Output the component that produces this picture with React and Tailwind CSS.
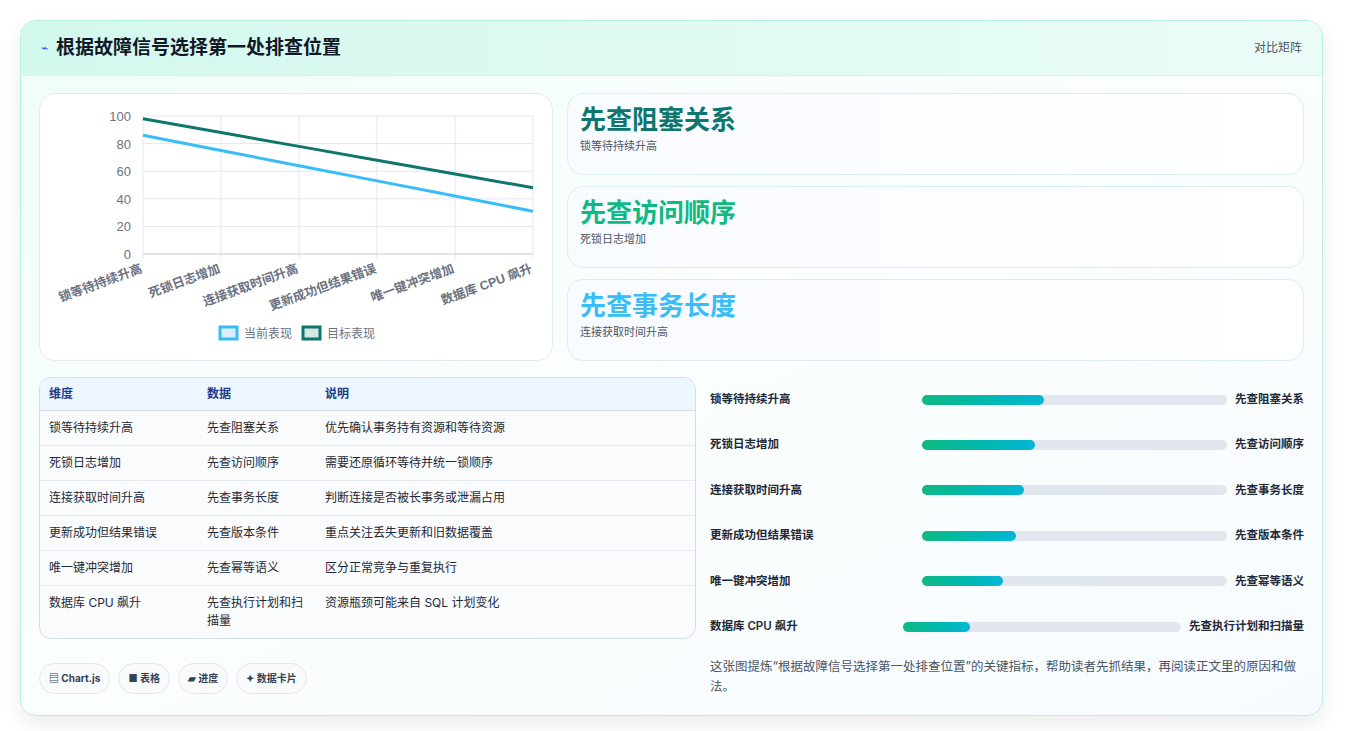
const rows = [
  ['锁等待持续升高', '先查阻塞关系', '优先确认事务持有资源和等待资源', 40],
  ['死锁日志增加', '先查访问顺序', '需要还原循环等待并统一锁顺序', 37],
  ['连接获取时间升高', '先查事务长度', '判断连接是否被长事务或泄漏占用', 33.5],
  ['更新成功但结果错误', '先查版本条件', '重点关注丢失更新和旧数据覆盖', 31],
  ['唯一键冲突增加', '先查幂等语义', '区分正常竞争与重复执行', 26.5],
  ['数据库 CPU 飙升', '先查执行计划和扫描量', '资源瓶颈可能来自 SQL 计划变化', 24],
]

const cards = [
  ['先查阻塞关系', '锁等待持续升高', 'text-[#0f766e]'],
  ['先查访问顺序', '死锁日志增加', 'text-[#10b981]'],
  ['先查事务长度', '连接获取时间升高', 'text-[#38bdf8]'],
]

function Chart() {
  const x0 = 103, x1 = 493, y0 = 160, y1 = 22
  const xs = [0, 1, 2, 3, 4, 5].map(i => x0 + (i * (x1 - x0)) / 5)
  const y = v => y0 - ((y0 - y1) * v) / 100
  const cur = [86, 75, 64, 53, 42, 31]
  const tgt = [98, 88, 78, 68, 58, 48]
  return (
    <svg width="513" height="267" className="block">
      {[0, 20, 40, 60, 80, 100].map(v => (
        <g key={v}>
          <line x1={x0} x2={x1} y1={y(v)} y2={y(v)} stroke="#e5e7f0" />
          <text x={x0 - 12} y={y(v) + 5} textAnchor="end" fontSize="13" fill="#6b7280" fontFamily="Liberation Sans, sans-serif">{v}</text>
        </g>
      ))}
      {xs.map((x, i) => (
        <line key={i} x1={x} x2={x} y1={y1} y2={y0 + 5} stroke="#e5e7f0" />
      ))}
      <line x1={x0} x2={x1} y1={y0} y2={y0} stroke="#d1d5db" />
      <polyline points={xs.map((x, i) => `${x},${y(cur[i])}`).join(' ')} fill="none" stroke="#38bdf8" strokeWidth="3" />
      <polyline points={xs.map((x, i) => `${x},${y(tgt[i])}`).join(' ')} fill="none" stroke="#0f766e" strokeWidth="3" />
      {rows.map((r, i) => (
        <text key={i} x={xs[i]} y={y0 + 18} textAnchor="end" fontSize="12.5" fontWeight="bold" fill="#6b7280" transform={`rotate(-20 ${xs[i]} ${y0 + 18})`} fontFamily="Liberation Sans, 'Noto Sans CJK SC', sans-serif">{r[0]}</text>
      ))}
      <rect x="180" y="233" width="17" height="12" fill="#dbeefe" stroke="#38bdf8" strokeWidth="3" />
      <text x="204" y="244" fontSize="12" fill="#6b7280" fontFamily="'Noto Sans CJK SC', sans-serif">当前表现</text>
      <rect x="263" y="233" width="17" height="12" fill="#d6e6e2" stroke="#0f766e" strokeWidth="3" />
      <text x="287" y="244" fontSize="12" fill="#6b7280" fontFamily="'Noto Sans CJK SC', sans-serif">目标表现</text>
    </svg>
  )
}

export default function App() {
  return (
    <div className="min-h-screen bg-white p-5 pr-[22px] text-[#1f2937]" style={{ fontFamily: "Inter, 'Noto Sans CJK SC', sans-serif" }}>
      <div className="rounded-2xl border border-[#b8efe0] bg-gradient-to-br from-[#effdf8] via-[#fbfefe] to-[#f6fbff] shadow-[0_8px_20px_rgba(0,0,0,0.08)] overflow-hidden">
        <div className="flex items-center justify-between h-[55px] px-5 bg-gradient-to-r from-[#d3f8ee] to-[#ebfcf8] border-b border-[#dcefe9]">
          <div className="flex items-center gap-2">
            <span className="text-[#2563eb] text-xs">⌁</span>
            <h1 className="text-[19px] font-bold text-[#111827]">根据故障信号选择第一处排查位置</h1>
          </div>
          <span className="text-xs text-[#4b5563]">对比矩阵</span>
        </div>
        <div className="p-[18px] pt-[17px]">
          <div className="flex gap-[14px]">
            <div className="w-[514px] h-[268px] rounded-2xl bg-white border border-[#e3ebf2]"><Chart /></div>
            <div className="flex-1 flex flex-col gap-[11px]">
              {cards.map(c => (
                <div key={c[0]} className="h-[82px] rounded-2xl border border-[#dbeef0] bg-gradient-to-r from-[#f8fbff] to-white px-3 pt-2">
                  <div className={`text-[26px] font-bold leading-9 ${c[2]}`}>{c[0]}</div>
                  <div className="text-[11px] text-[#4b5563]">{c[1]}</div>
                </div>
              ))}
            </div>
          </div>
          <div className="flex gap-[14px] mt-4">
            <div className="w-[657px]">
              <div className="rounded-xl border border-[#d5dde8] overflow-hidden bg-[#f9fbfd] text-xs">
                <div className="flex h-[33px] items-center bg-[#eef6ff] font-bold text-[#1e3a8a] border-b border-[#d5dde8]">
                  <div className="w-[167px] pl-[9px]">维度</div><div className="w-[118px]">数据</div><div>说明</div>
                </div>
                {rows.map(r => (
                  <div key={r[0]} className="flex py-[8px] border-b last:border-b-0 border-[#e5eaf0] leading-[18px] text-[#1f2937]">
                    <div className="w-[167px] pl-[9px]">{r[0]}</div><div className="w-[118px] pr-3">{r[1]}</div><div>{r[2]}</div>
                  </div>
                ))}
              </div>
              <div className="flex gap-2 mt-6 text-[10px] font-bold text-[#374151]">
                {['▤ Chart.js', '■ 表格', '▰ 进度', '✦ 数据卡片'].map(t => (
                  <span key={t} className="rounded-full border border-[#e5e7eb] bg-[#f8fafc] px-[9px] py-[7px]">{t}</span>
                ))}
              </div>
            </div>
            <div className="flex-1">
              {rows.map(r => (
                <div key={r[0]} className="flex items-center h-[45.4px] text-[11.5px] font-semibold text-[#1f2937]">
                  <div className="flex-[2] whitespace-nowrap">{r[0]}</div>
                  <div className="flex-[3] h-[10px] rounded-full bg-[#e2e7ef] mx-2">
                    <div className="h-full rounded-full bg-gradient-to-r from-[#10b981] to-[#06b6d4]" style={{ width: `${r[3]}%` }} />
                  </div>
                  <div className="whitespace-nowrap">{r[1]}</div>
                </div>
              ))}
              <p className="text-[12.5px] text-[#4b5563] leading-5 mt-2 pr-2">这张图提炼“根据故障信号选择第一处排查位置”的关键指标，帮助读者先抓结果，再阅读正文里的原因和做法。</p>
            </div>
          </div>
        </div>
      </div>
    </div>
  )
}
